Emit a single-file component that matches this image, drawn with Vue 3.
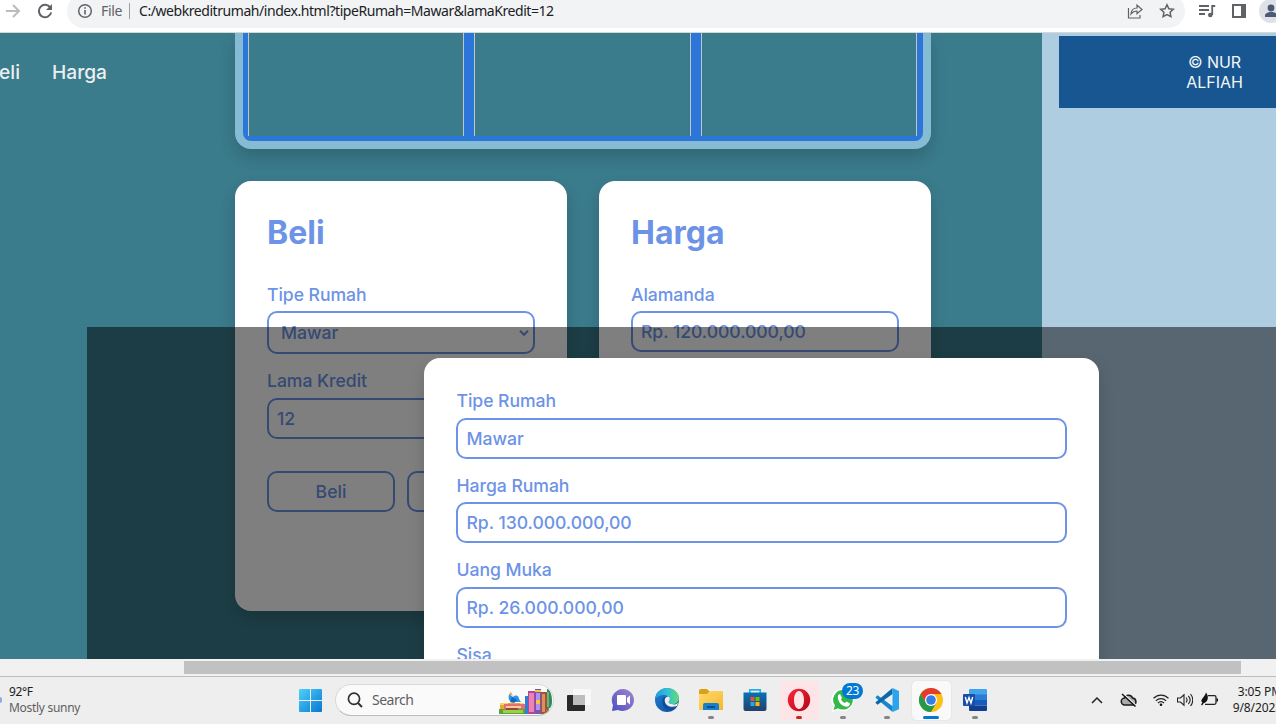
<script setup>
const modalFields = [
  { label: 'Tipe Rumah', value: 'Mawar' },
  { label: 'Harga Rumah', value: 'Rp. 130.000.000,00' },
  { label: 'Uang Muka', value: 'Rp. 26.000.000,00' },
  { label: 'Sisa', value: '' },
]
</script>

<template>
  <div class="screen">
    <header class="toolbar">
      <svg class="fwd" width="16" height="16" viewBox="0 0 16 16"><path d="M1 8h13M8 2l6 6-6 6" fill="none" stroke="#babcbe" stroke-width="2" /></svg>
      <svg class="reload" width="16" height="16" viewBox="0 0 16 16"><path d="M13.3 4.6A6.2 6.2 0 1 0 14.2 9.4" fill="none" stroke="#5f6368" stroke-width="2" /><path d="M15 1v6H9z" fill="#5f6368" /></svg>
      <div class="omnibox">
        <svg class="info" width="16" height="16" viewBox="0 0 16 16"><circle cx="8" cy="8" r="6.3" fill="none" stroke="#5f6368" stroke-width="1.5" /><path d="M8 7v4.500M8 4.200v1.600" stroke="#5f6368" stroke-width="1.600" /></svg>
        <span class="scheme">File</span>
        <span class="sep"></span>
        <span class="url">C:/webkreditrumah/index.html?tipeRumah=Mawar&amp;lamaKredit=12</span>
        <svg class="share" width="16" height="16" viewBox="0 0 16 16"><path d="M1.500 5v10H13v-3M4 11c.3-4 2.600-6 6-6V2l5 4.500-5 4.300V8C7.500 8 5.700 8.800 4 11z" fill="none" stroke="#5f6368" stroke-width="1.200" /></svg>
        <svg class="star" width="16" height="16" viewBox="0 0 16 16"><path d="M8 1.800l1.900 4 4.400.5-3.200 3 .8 4.300L8 11.500l-3.900 2.100.8-4.300-3.200-3 4.400-.5z" fill="none" stroke="#5f6368" stroke-width="1.500" /></svg>
      </div>
      <svg class="queue" width="18" height="16" viewBox="0 0 18 16"><path d="M1 3h10M1 7h10M1 11h6M14.200 12V3h3" fill="none" stroke="#5f6368" stroke-width="1.800" /><circle cx="12.300" cy="12" r="2.300" fill="#5f6368" /></svg>
      <svg class="panel" width="14" height="14" viewBox="0 0 14 14"><path d="M1 1h12v12H1z" fill="none" stroke="#5f6368" stroke-width="2" /><path d="M9 1h4v12H9z" fill="#5f6368" /></svg>
      <svg class="avatar" width="24" height="24" viewBox="0 0 24 24"><circle cx="12" cy="12" r="12" fill="#dee1e6" /><circle cx="12" cy="9" r="3.400" fill="#4d5a73" /><path d="M6 18v-1.500c0-2.300 3-3.500 6-3.500s6 1.200 6 3.500V18z" fill="#4d5a73" /></svg>
    </header>

    <div class="viewport">
      <div class="page">
        <nav class="nav"><a>Beli</a><a>Harga</a></nav>
        <main class="main">
          <div class="gallery"><div class="cell"></div><div class="cell"></div><div class="cell"></div></div>
          <div class="cards">
            <section class="card">
              <h2>Beli</h2>
              <label>Tipe Rumah</label>
              <div class="input select">Mawar<svg width="10" height="6" viewBox="0 0 10 6"><path d="M1 .8l4 4 4-4" fill="none" stroke="#6c93e6" stroke-width="2" /></svg></div>
              <label class="next">Lama Kredit</label>
              <div class="input">12</div>
              <div class="buttons"><button>Beli</button><button></button></div>
            </section>
            <section class="card">
              <h2>Harga</h2>
              <label>Alamanda</label>
              <div class="input">Rp. 120.000.000,00</div>
            </section>
          </div>
        </main>
      </div>
      <aside class="aside"><div class="copy">© NUR<br />ALFIAH</div></aside>
      <div class="overlay">
        <div class="modal">
          <div v-for="f in modalFields" :key="f.label" class="field">
            <label>{{ f.label }}</label>
            <div class="input">{{ f.value }}</div>
          </div>
        </div>
      </div>
    </div>

    <div class="scroll"><div class="thumb"></div></div>

    <footer class="taskbar">
      <div class="weather">
        <i class="cloud"></i>
        <div><div class="temp">92°F</div><div class="cond">Mostly sunny</div></div>
      </div>
      <svg class="start" width="23" height="23" viewBox="0 0 23 23">
        <defs><linearGradient id="win" x1="0" y1="0" x2="1" y2="1"><stop offset="0" stop-color="#4fd0fa" /><stop offset="1" stop-color="#0677d2" /></linearGradient></defs>
        <path d="M0 1q0-1 1-1h10v11H0zM12 0h10q1 0 1 1v10H12zM0 12h11v11H1q-1 0-1-1zM12 12h11v10q0 1-1 1H12z" fill="url(#win)" />
      </svg>
      <div class="search">
        <svg width="16" height="16" viewBox="0 0 16 16"><circle cx="7" cy="6.800" r="5.600" fill="none" stroke="#303030" stroke-width="1.700" /><path d="M11 11l4 4" stroke="#303030" stroke-width="2" /></svg>
        <span>Search</span>
        <svg class="books" width="54" height="26" viewBox="0 0 54 26">
          <path d="M1 14h24v6H1z" fill="#f0a437" /><path d="M1 14h24v2H1z" fill="#ffd35a" />
          <path d="M5 15h21v5H5z" fill="#e4706d" /><path d="M7 17h15v2H7z" fill="#f8c7a4" />
          <path d="M0 20h26v5H0z" fill="#59a52f" /><path d="M4 21h20v3H4z" fill="#9bd04c" /><path d="M7 19h12v2H7z" fill="#9a4a2a" />
          <path d="M10 5l4 3c3-3 6-1 6 2l2 3h-9c-3-1-4-3-3-8z" fill="#2c94e8" /><path d="M13 8l5 3-3 3-4-1z" fill="#1764c3" /><path d="M10 5l2-2 2 4zM9 14h12v1H9z" fill="#f1a33c" />
          <path d="M26 7h3v18h-3z" fill="#2f7dd8" /><path d="M29 2h7v23h-7z" fill="#b4478f" /><path d="M30 4h5v19h-5z" fill="#eb83b8" />
          <path d="M36 0h6v25h-6z" fill="#7655b8" /><path d="M37 4h4v17h-4z" fill="#b392ed" /><path d="M36 1h6v2h-6zM37 11h4v4h-4z" fill="#f6c543" />
          <path d="M42 3h6v22h-6z" fill="#a4532c" /><path d="M43 5h3v18h-3z" fill="#dc9158" />
          <path d="M48 0c3 0 5 6 5 12s-2 8-5 8z" fill="#33895b" /><path d="M47 20h3v4h-3z" fill="#a9642f" /><path d="M48 3h2v15h-2z" fill="#65b783" />
        </svg>
      </div>
      <div class="apps">
        <div class="app">
          <svg width="24" height="24" viewBox="0 0 24 24"><rect x="0" y="7" width="18" height="16" rx="1" fill="#292929" /><rect x="6" y="1" width="18" height="16" rx="1" fill="#f8f8f8" /><path d="M6 7h12v10H7q-1 0-1-1z" fill="#bdbdbd" /></svg>
        </div>
        <div class="app">
          <svg width="24" height="24" viewBox="0 0 24 24">
            <defs><linearGradient id="tm" x1="0" y1="1" x2="1" y2="0"><stop offset="0" stop-color="#4d50bd" /><stop offset="1" stop-color="#a185d5" /></linearGradient></defs>
            <path d="M12 1a11.300 11 0 1 1-5 21L1 23l1-6A11.200 11 0 0 1 12 1z" fill="url(#tm)" /><rect x="6" y="7" width="9" height="10" rx="1" fill="#fff" /><path d="M16 10l3-2.500v9L16 14z" fill="#fff" />
          </svg>
        </div>
        <div class="app">
          <svg width="24" height="24" viewBox="0 0 24 24">
            <defs><linearGradient id="eg" x1="0" y1=".3" x2="1" y2=".3"><stop offset="0" stop-color="#209ad8" /><stop offset=".5" stop-color="#32bfd8" /><stop offset="1" stop-color="#66dc70" /></linearGradient><linearGradient id="eb" x1="0" y1="0" x2="1" y2="1"><stop offset="0" stop-color="#1b83d6" /><stop offset="1" stop-color="#134997" /></linearGradient></defs>
            <circle cx="12" cy="12" r="12" fill="url(#eb)" />
            <path d="M0 11C1 4 6 0 12 0c7 0 12 5 12 10 0 4-3 6-6 6-4 0-5-1-4-3 1-4-2-6-5-6-4 0-7 2-9 4z" fill="url(#eg)" />
            <path d="M9 9c-3 3-2 9 2 12 3 2 7 2 10-1-5 1-9-1-10-5-.5-2 0-4 1-5z" fill="#0e4c9d" />
            <path d="M14 9c-3-1-5 2-4 5 1 4 6 6 12 4l2-5c-1 3-4 4-7 3-3 0-4-2-3-3 1-2 1-3 0-4z" fill="#eee" />
          </svg>
        </div>
        <div class="app">
          <svg width="24" height="24" viewBox="0 0 24 24">
            <defs><linearGradient id="fl" x1="0" y1="0" x2="1" y2="1"><stop offset="0" stop-color="#ffdb6b" /><stop offset="1" stop-color="#f7b72e" /></linearGradient></defs>
            <path d="M0 3q0-2 2-2h6l3 3h12q1 0 1 1v6H0z" fill="#dda012" /><path d="M0 6h8l3-3h12q1 0 1 1v18H0z" fill="url(#fl)" /><path d="M4 22v-5q0-2 2-2h12q2 0 2 2v5z" fill="#1680cf" /><path d="M8 18h8v2H8z" fill="#0c4f91" />
          </svg>
          <i class="dot"></i>
        </div>
        <div class="app">
          <svg width="24" height="24" viewBox="0 0 24 24">
            <defs><linearGradient id="st" x1="0" y1="0" x2="0" y2="1"><stop offset="0" stop-color="#0872b9" /><stop offset="1" stop-color="#23406b" /></linearGradient></defs>
            <path d="M6.800 5V1.800h10.400V5" fill="none" stroke="#20b4e8" stroke-width="1.700" /><path d="M.5 4.500h23V21q0 2-2 2h-19q-2 0-2-2z" fill="url(#st)" />
            <path d="M7.500 9h4v4h-4z" fill="#f25022" /><path d="M12.500 9h4v4h-4z" fill="#7fba00" /><path d="M7.500 14h4v4h-4z" fill="#26a7e8" /><path d="M12.500 14h4v4h-4z" fill="#ffb900" />
          </svg>
        </div>
        <div class="app">
          <div class="tile pink"></div>
          <svg width="24" height="24" viewBox="0 0 24 24">
            <defs><linearGradient id="op" x1="0" y1="0" x2="1" y2="1"><stop offset="0" stop-color="#ff2638" /><stop offset="1" stop-color="#ad0718" /></linearGradient></defs>
            <path fill-rule="evenodd" d="M12 .8a11.200 11.200 0 1 0 0 22.400 11.200 11.200 0 0 0 0-22.400zM12 3c3 0 5 4 5 9s-2 9-5 9-5-4-5-9 2-9 5-9z" fill="url(#op)" />
          </svg>
          <i class="dot red"></i>
        </div>
        <div class="app">
          <svg width="24" height="24" viewBox="0 0 24 24"><path d="M12 .5A11.300 11.300 0 1 1 6.700 22L.5 24l1.800-6A11.300 11.300 0 0 1 12 .5z" fill="#fff" /><path d="M12 2a9.800 9.800 0 1 1-5 18.200L2.500 22l1.400-4.700A9.800 9.800 0 0 1 12 2z" fill="#35b84b" /><path d="M7 7l2-1 2 4-1 1.500c1 2 2.500 3 4 3.500l1.500-1.500 3.500 2c0 3-3 4-6 2.500-3-1-7-5-6-11z" fill="#fff" /></svg>
          <span class="badge">23</span>
          <i class="dot"></i>
        </div>
        <div class="app">
          <svg width="24" height="24" viewBox="0 0 24 24"><path d="M17.500 24L.3 9.600 2.500 7.300 18 18.500z" fill="#1686ce" /><path d="M.3 14.400L17.500 0v6L2.500 16.700z" fill="#0a67ad" /><path d="M17.500 0L24 3v18.300L17.500 24z" fill="#2ca4ec" /></svg>
          <i class="dot"></i>
        </div>
        <div class="app">
          <div class="tile active"></div>
          <svg width="24" height="24" viewBox="0 0 24 24"><circle cx="12" cy="12" r="12" fill="#fbc116" /><path d="M1.600 6A12 12 0 0 1 22.400 6H12v6l-5.200 3z" fill="#e33b2e" /><path d="M1.600 6A12 12 0 0 0 12 24l5.200-9-5.200 3-5.200-3z" fill="#229a49" /><circle cx="12" cy="12" r="6" fill="#fff" /><circle cx="12" cy="12" r="4.800" fill="#357de8" /></svg>
          <i class="dot wide"></i>
        </div>
        <div class="app">
          <svg width="24" height="24" viewBox="0 0 24 24"><path d="M6 2q0-1 1-1h16q1 0 1 1v5H6z" fill="#41a5ee" /><path d="M6 6.500h18V12H6z" fill="#2b7cd3" /><path d="M6 12h18v5.500H6z" fill="#185abd" /><path d="M6 17.500h18V22q0 1-1 1H7q-1 0-1-1z" fill="#103f91" /><rect x="0" y="6" width="12" height="12" rx="1" fill="#174ea6" /><path d="M2.300 9l1.700 6 2-5.500L8 15l1.700-6" fill="none" stroke="#fff" stroke-width="1.400" /></svg>
          <i class="dot"></i>
        </div>
      </div>
      <div class="tray">
        <svg width="32" height="20" viewBox="0 0 32 20"><path d="M11 13l5-5 5 5" fill="none" stroke="#222" stroke-width="1.500" /></svg>
        <svg width="32" height="20" viewBox="0 0 32 20"><path d="M12 15a3.500 3.500 0 0 1-.5-7c1-3.500 6.500-4 8 0a3.600 3.600 0 0 1 1 7z" fill="#aaa" stroke="#1b1b1b" stroke-width="1.500" /><path d="M10 3.200l13.500 12.500" stroke="#eee" stroke-width="1.500" /><path d="M9 4l13.500 12.500" stroke="#111" stroke-width="1.400" /></svg>
        <svg width="32" height="20" viewBox="0 0 32 20"><path d="M8.500 8.300c4.500-4.300 10.500-4.300 15 0M10.800 10.800c3-3 7.400-3 10.400 0M13 13c1.800-1.800 4.200-1.800 6 0" fill="none" stroke="#222" stroke-width="1.200" /><circle cx="16" cy="14.800" r="1.300" fill="#111" /></svg>
        <svg width="16" height="20" viewBox="0 0 16 20"><path d="M.5 8h3L7 4.800v10.400L3.500 12h-3zM9 7.500c1.300 1.500 1.300 3.500 0 5M11.300 5.800c2.300 2.600 2.300 5.800 0 8.400M13.500 4c3 3.500 3 8.500 0 12" fill="none" stroke="#222" stroke-width="1.100" /></svg>
        <svg width="30" height="20" viewBox="0 0 30 20"><path d="M15 5.700h6.500q1.500 0 1.500 1.500v5.600q0 1.500-1.500 1.500H12" fill="none" stroke="#222" stroke-width="1.300" /><path d="M23.500 8.500h1.500v3h-1.500z" fill="#111" /><path d="M13 2.500c2.500 3 2.500 7 0 9.500-2 1.500-4 1-4.500-.5-.5-3 3-4 4.500-9z" fill="#111" /><path d="M8.500 15l3-4" stroke="#111" stroke-width="1.300" /></svg>
      </div>
      <div class="clock"><div class="time">3:05 PM</div><div>9/8/2023</div></div>
    </footer>
  </div>
</template>

<style>
html, body { margin: 0; overflow: hidden; }
</style>

<style scoped>
* { box-sizing: border-box; }
.screen { position: relative; width: 1276px; height: 724px; overflow: hidden; font-family: Inter, sans-serif; background: #eee; }
.screen svg { display: block; flex: none; }
.toolbar { display: flex; height: 33px; background: #fff; border-bottom: 1px solid #d5d7d8; font: 14px/20px "Noto Sans", sans-serif; overflow: hidden; }
.fwd { margin: 3px 0 0 5px; }
.reload { margin: 3px 0 0 16px; }
.omnibox { display: flex; flex: none; align-items: center; width: 1118px; height: 34px; margin: -6px 0 0 14px; border-radius: 17px; background: #f1f3f4; }
.info { margin-left: 10px; }
.scheme { width: 28px; margin-left: 8px; color: #5f6368; letter-spacing: -.35px; }
.sep { width: 1px; height: 16px; background: #9b9ea2; }
.url { flex: none; margin-left: 9px; color: #202124; letter-spacing: -.44px; white-space: nowrap; }
.share { margin-left: auto; }
.star { margin: 0 10px 0 16px; }
.queue { margin: 3px 0 0 13px; }
.panel { margin: 4px 0 0 16px; }
.avatar { margin: -1px 0 0 13px; }

.viewport { position: relative; display: flex; height: 626px; overflow: hidden; background: #afcde0; }
.page { display: flex; flex: none; width: 1042px; background: #3a7b8c; }
.nav { display: flex; flex: none; gap: 32px; width: 235px; padding: 27px 128px 0 0; justify-content: flex-end; height: 60px; color: #ebeff1; font-size: 19.200px; font-weight: 500; line-height: 24px; }
.main { width: 696px; }
.gallery { display: grid; grid-template-columns: 216px 217px 216px; gap: 10px; height: 116px; padding: 0 5px 5px; border: 8px solid #86bcd3; border-top: 0; border-radius: 0 0 16px 16px; background: #2c76d9; box-shadow: 0 8px 16px rgba(0, 0, 0, .16); }
.cell { background: #3a7b8c; border: solid #bfc5c8; border-width: 0 1px; }
.cards { display: flex; align-items: flex-start; gap: 32px; margin-top: 32px; }
.card { width: 332px; height: 430px; padding: 32px; border-radius: 16px; background: #fff; box-shadow: 0 8px 16px rgba(0, 0, 0, .16); color: #6c93e6; }
.card + .card { height: 500px; }
h2 { margin: 0 0 32px; font-size: 32px; font-weight: 700; line-height: 39px; }
label { display: block; height: 22px; margin-bottom: 5px; font-size: 17.600px; font-weight: 500; line-height: 22px; letter-spacing: -.04px; }
.input { height: 41px; padding: 0 8px; border: 2px solid #6c93e6; border-radius: 10px; font-size: 17.600px; font-weight: 500; line-height: 37px; letter-spacing: -.04px; }
.select { display: flex; align-items: center; justify-content: space-between; height: 43px; padding: 0 4px 0 12px; }
.next { margin-top: 16px; margin-bottom: 6px; }
.buttons { display: flex; gap: 12px; margin-top: 32px; }
button { width: 128px; height: 41px; padding: 0; border: 2px solid #6c93e6; border-radius: 10px; background: transparent; color: #6c93e6; font: 500 17.600px/37px Inter, sans-serif; }
.aside { flex: 1; padding: 3px 0 0 17px; }
.copy { height: 72px; padding: 16px 0 0 94px; background: #175691; color: #f3f5f7; font-size: 16px; line-height: 20px; text-align: center; letter-spacing: -.05px; }
.overlay { position: absolute; left: 87px; top: 294px; right: 0; bottom: 0; overflow: hidden; padding: 31px 0 0 337px; background: rgba(0, 0, 0, .5); }
.modal { width: 675px; height: 420px; padding: 32px; border-radius: 16px; background: #fff; color: #6c93e6; box-shadow: 0 8px 16px rgba(0, 0, 0, .16); }
.field { height: 84.500px; }
.field label { margin-bottom: 5.900px; padding-left: .5px; }
.field .input { padding-left: 8.500px; }

.scroll { height: 18px; padding: 2px 35px 3px 184px; background: #f1f1f1; border-bottom: 1px solid #bcbcbc; }
.thumb { height: 13px; background: #c1c1c1; }

.taskbar { display: flex; align-items: center; height: 47px; background: #eee; font: 12px/16px "Noto Sans", sans-serif; color: #1c1c1c; }
.weather { display: flex; flex: none; align-items: center; gap: 7px; width: 299px; padding-bottom: 1px; }
.cloud { width: 2px; height: 6px; border-radius: 0 3px 3px 0; background: #8fa9e2; }
.temp { letter-spacing: -.4px; }
.cond { color: #606060; letter-spacing: -.3px; }
.start { margin-right: 13px; }
.search { display: flex; align-items: center; flex: none; width: 219px; height: 32px; margin-bottom: 1px; padding-left: 11px; border: 1px solid #d9d9d9; border-bottom-color: #bdbdbd; border-radius: 16px; background: #fafafa; color: #5f5f5f; font-size: 14px; overflow: hidden; }
.search span { margin-left: 9px; letter-spacing: -.5px; }
.books { margin: 3px 0 0 auto; }
.apps { display: flex; flex: none; margin-left: 3px; }
.app { position: relative; display: flex; align-items: center; justify-content: center; width: 44px; height: 47px; padding-bottom: 1px; }
.app svg { position: relative; }
.tile { position: absolute; left: 3px; top: 4px; width: 39px; height: 39px; border-radius: 4px; }
.pink { background: #fde5e7; }
.active { background: #f9f9f9; box-shadow: 0 0 1px #bbb; }
.dot { position: absolute; left: 19px; bottom: 5px; width: 6px; height: 3px; border-radius: 2px; background: #868686; }
.red { background: #c42b1c; }
.wide { left: 14px; width: 16px; background: #0078d4; }
.badge { position: absolute; left: 21px; top: 6px; width: 21px; height: 16px; border-radius: 8px; background: #0078d4; color: #fff; line-height: 16px; text-align: center; letter-spacing: -.4px; }
.tray { display: flex; flex: none; margin: 0 0 1px 84px; }
.clock { flex: none; width: 59px; padding-bottom: 1px; text-align: right; letter-spacing: -.1px; }
</style>
